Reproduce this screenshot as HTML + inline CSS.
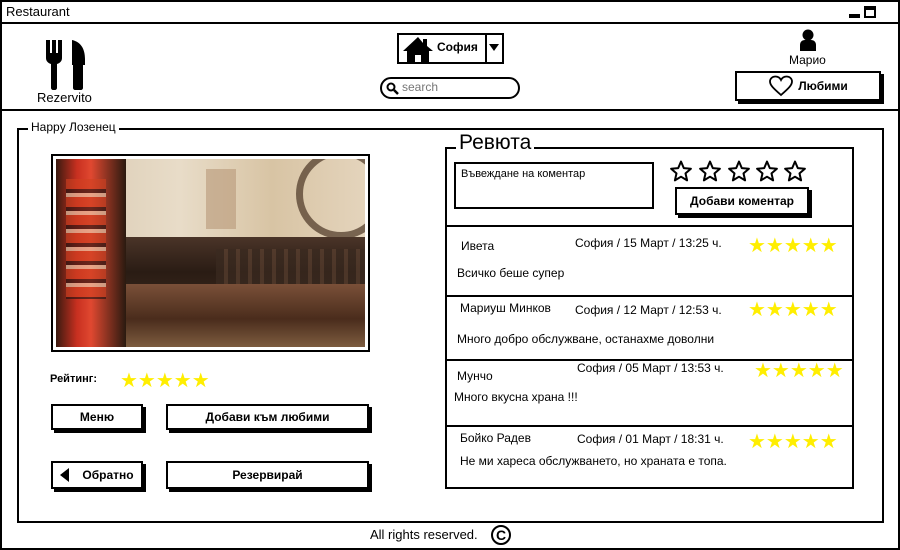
<!DOCTYPE html>
<html><head><meta charset="utf-8"><style>
*{margin:0;padding:0;box-sizing:border-box}
body{width:900px;height:550px;background:#fff;font-family:"Liberation Sans","DejaVu Sans",sans-serif;color:#000;position:relative;overflow:hidden}
.a{position:absolute}
.t{position:absolute;white-space:nowrap;font-size:12px}
.box{position:absolute;border:2px solid #000;background:#fff}
.btn{position:absolute;border:2px solid #000;background:#fff;box-shadow:3px 3px 0 #000;font-size:12px;font-weight:bold;display:flex;align-items:center;justify-content:center}
.st{position:absolute;color:#ffee00;font-family:"DejaVu Sans",sans-serif;font-size:20px;letter-spacing:0px;white-space:nowrap;line-height:20px}
.hl{position:absolute;height:2px;background:#000}
</style></head><body>
<div class="box" style="left:0;top:0;width:900px;height:550px;border-width:2px"></div>
<div class="t" style="left:6px;top:4px;font-size:13px">Restaurant</div>
<div class="a" style="left:849px;top:14px;width:11px;height:4px;background:#000"></div>
<div class="a" style="left:864px;top:6px;width:12px;height:12px;border:2px solid #000;border-top-width:4px"></div>
<div class="hl" style="left:0;top:22px;width:900px"></div>
<!-- logo -->
<svg class="a" style="left:44px;top:40px" width="44" height="50" viewBox="0 0 44 50">
<path d="M2 0h4v13h2V0h4v13h2V0h4v18c0 3-2 5-5 6v24c0 1-1 2-2 2H9c-1 0-2-1-2-2V24c-3-1-5-3-5-6z" fill="#000"/>
<path d="M28 0c9 2 13 9 13 19v6h-2v23c0 1-1 2-2 2h-6c-1 0-2-1-2-2V25h-1z" fill="#000"/>
</svg>
<div class="t" style="left:37px;top:90px;font-size:13px">Rezervito</div>
<!-- city -->
<div class="box" style="left:397px;top:33px;width:107px;height:31px"></div>
<div class="a" style="left:485px;top:33px;width:2px;height:31px;background:#000"></div>
<svg class="a" style="left:402px;top:36px" width="32" height="26" viewBox="0 0 32 26"><path d="M16 1L1 15h4v11h8v-7h6v7h8V15h4L25 10V3h-4v4z" fill="#000"/></svg>
<div class="t" style="left:437px;top:40px;font-weight:bold;font-size:12px">София</div>
<svg class="a" style="left:489px;top:44px" width="10" height="7"><path d="M0 0h10L5 7z" fill="#000"/></svg>
<!-- search -->
<div class="box" style="left:380px;top:77px;width:140px;height:22px;border-radius:11px"></div>
<svg class="a" style="left:386px;top:82px" width="13" height="13"><circle cx="5" cy="5" r="3.5" stroke="#000" stroke-width="2" fill="none"/><path d="M8 8l4 4" stroke="#000" stroke-width="2.5"/></svg>
<div class="t" style="left:402px;top:80px;color:#777;font-size:12px">search</div>
<!-- user -->
<svg class="a" style="left:799px;top:29px" width="18" height="22"><circle cx="9" cy="6" r="5.5" fill="#000"/><path d="M1 22v-6c0-3 2-5 5-5h6c3 0 5 2 5 5v6z" fill="#000"/></svg>
<div class="t" style="left:789px;top:53px;font-size:12px">Марио</div>
<div class="btn" style="left:735px;top:71px;width:146px;height:30px"><svg width="26" height="22" viewBox="0 0 26 22" style="margin-right:4px"><path d="M13 20C5 13 2 10 2 6.5 2 3.5 4.5 1.5 7.5 1.5c2.5 0 4.5 1.5 5.5 3.5 1-2 3-3.5 5.5-3.5 3 0 5.5 2 5.5 5 0 3.5-3 6.5-11 13.5z" fill="none" stroke="#000" stroke-width="1.8"/></svg>Любими</div>
<div class="hl" style="left:0;top:109px;width:900px"></div>
<!-- group -->
<div class="box" style="left:17px;top:128px;width:867px;height:395px"></div>
<div class="t" style="left:28px;top:120px;background:#fff;padding:0 3px;font-size:12px">Happy Лозенец</div>
<!-- image -->
<div class="box" style="left:51px;top:154px;width:319px;height:198px;padding:3px;background:#fff">
<div style="width:100%;height:100%;position:relative;overflow:hidden;background:linear-gradient(90deg,#d8c8b0 0%,#e8dcc8 40%,#d8c4a4 70%,#e4d4bc 100%)">
<div class="a" style="left:240px;top:-10px;width:90px;height:90px;border-radius:50%;border:7px solid #4a3424;opacity:.7"></div>
<div class="a" style="left:150px;top:10px;width:30px;height:60px;background:#b89878;opacity:.6"></div>
<div class="a" style="left:70px;top:78px;width:250px;height:70px;background:linear-gradient(180deg,#4a3428,#2a1c14 50%,#3a281c)"></div>
<div class="a" style="left:160px;top:90px;width:150px;height:50px;background:repeating-linear-gradient(90deg,#3a2a20 0 8px,#5a4030 8px 12px);opacity:.7"></div>
<div class="a" style="left:30px;top:125px;width:290px;height:70px;background:linear-gradient(180deg,#7a5038,#4a2c1c 50%,#8a6848)"></div>
<div class="a" style="left:0;top:0;width:70px;height:190px;background:linear-gradient(90deg,#3a1a10,#c83020 30%,#e04830 50%,#2a1a10)"></div>
<div class="a" style="left:10px;top:20px;width:40px;height:120px;background:repeating-linear-gradient(180deg,#d04020 0 10px,#1a1010 10px 14px,#f0e0c0 14px 18px);opacity:.6"></div>
</div></div>
<div class="t" style="left:50px;top:373px;font-weight:bold;font-size:11px">Рейтинг:</div>
<div class="st" style="left:120px;top:370px">★★★★★</div>
<div class="btn" style="left:51px;top:404px;width:92px;height:26px">Меню</div>
<div class="btn" style="left:166px;top:404px;width:203px;height:26px">Добави към любими</div>
<div class="btn" style="left:51px;top:461px;width:92px;height:28px"><svg width="10" height="14" style="margin-right:12px"><path d="M9 0v14L0 7z" fill="#000"/></svg>Обратно</div>
<div class="btn" style="left:166px;top:461px;width:203px;height:28px">Резервирай</div>
<!-- reviews -->
<div class="box" style="left:445px;top:147px;width:409px;height:342px"></div>
<div class="t" style="left:456px;top:131px;background:#fff;padding:0 3px;font-size:21px">Ревюта</div>
<div class="box" style="left:454px;top:162px;width:200px;height:47px"></div>
<div class="t" style="left:461px;top:168px;font-size:11px">Въвеждане на коментар</div>
<svg class="a" style="left:669px;top:160px" width="142" height="24" viewBox="0 0 142 24">
<defs><path id="s" d="M11 1.5l2.8 6.6 7.1.6-5.4 4.7 1.6 7-6.1-3.7-6.1 3.7 1.6-7L1.1 8.7l7.1-.6z" fill="none" stroke="#000" stroke-width="2" stroke-linejoin="round"/></defs>
<use href="#s" x="1"/><use href="#s" x="30"/><use href="#s" x="59"/><use href="#s" x="87"/><use href="#s" x="115"/>
</svg>
<div class="btn" style="left:675px;top:187px;width:134px;height:28px">Добави коментар</div>
<div class="hl" style="left:445px;top:225px;width:409px"></div>
<div class="hl" style="left:445px;top:295px;width:409px"></div>
<div class="hl" style="left:445px;top:359px;width:409px"></div>
<div class="hl" style="left:445px;top:425px;width:409px"></div>

<div class="t" style="left:461px;top:239px">Ивета</div>
<div class="t" style="left:575px;top:236px">София / 15 Март / 13:25 ч.</div>
<div class="st" style="left:748px;top:235px">★★★★★</div>
<div class="t" style="left:457px;top:266px">Всичко беше супер</div>

<div class="t" style="left:460px;top:301px">Мариуш Минков</div>
<div class="t" style="left:575px;top:303px">София / 12 Март / 12:53 ч.</div>
<div class="st" style="left:748px;top:299px">★★★★★</div>
<div class="t" style="left:457px;top:332px">Много добро обслужване, останахме доволни</div>

<div class="t" style="left:457px;top:369px">Мунчо</div>
<div class="t" style="left:577px;top:361px">София / 05 Март / 13:53 ч.</div>
<div class="st" style="left:754px;top:360px">★★★★★</div>
<div class="t" style="left:454px;top:390px">Много вкусна храна !!!</div>

<div class="t" style="left:460px;top:431px">Бойко Радев</div>
<div class="t" style="left:577px;top:432px">София / 01 Март / 18:31 ч.</div>
<div class="st" style="left:748px;top:431px">★★★★★</div>
<div class="t" style="left:460px;top:454px">Не ми хареса обслужването, но храната е топа.</div>
<!-- footer -->
<div class="t" style="left:370px;top:527px;font-size:13px">All rights reserved.</div>
<div class="a" style="left:491px;top:525px;width:20px;height:20px;border:2px solid #000;border-radius:50%;font-size:14px;font-weight:bold;display:flex;align-items:center;justify-content:center;line-height:1">C</div>
</body></html>
